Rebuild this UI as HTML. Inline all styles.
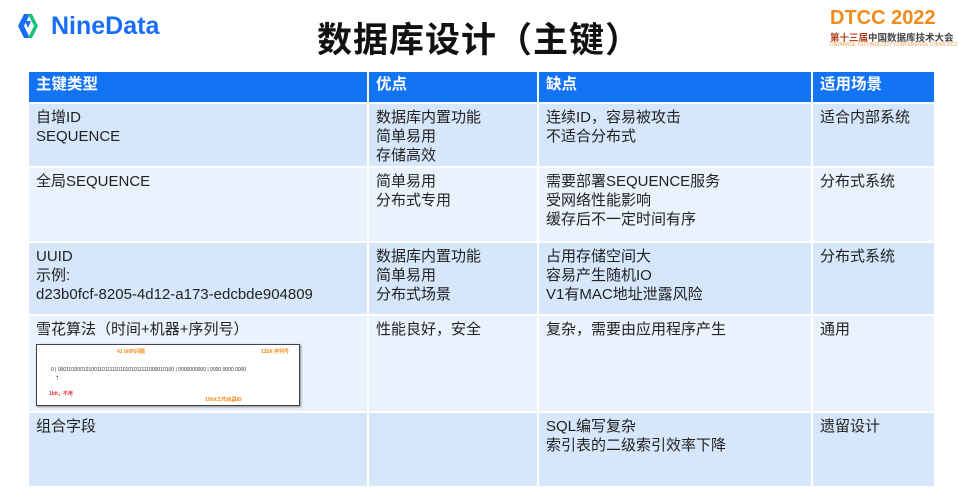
<!DOCTYPE html><html><head><meta charset="utf-8"><style>
body{margin:0;width:958px;height:499px;background:#fff;position:relative;overflow:hidden;font-family:"Liberation Sans","Noto Sans CJK SC",sans-serif}
.t{position:absolute;left:0;width:958px;top:12px;text-align:center;font-size:35px;font-weight:bold;color:#111;letter-spacing:1px}
.logo{position:absolute;left:14px;top:11px;display:flex;align-items:center}
.logo span{font-size:25px;font-weight:bold;color:#1a6ef5;margin-left:7px}
table{position:absolute;left:27px;top:70px;border-collapse:collapse;width:909px;table-layout:fixed}
td,th{border:2px solid #fff;vertical-align:top;text-align:left;padding:4px 7px 0;font-size:15px;line-height:19px;color:#222;overflow:hidden}
th{background:#1273f5;color:#fff;height:27px;font-size:15.5px;padding-top:3px;padding-bottom:0}
tr.d td{background:#d6e6fb}tr.l td{background:#eaf2fd}
</style></head><body>
<div class="logo"><svg width="30" height="30" viewBox="0 0 30 30"><path d="M10 3 L4 15 L10 27 L16 27 L10 15 L16 3Z" fill="#1a6ef5"/><path d="M18 3 L24 15 L18 27 L14 27 L20 15 L14 3Z" fill="#19c37d"/><path d="M11 10 L17 10 L14 17Z" fill="#1a6ef5"/></svg><span>NineData</span></div>
<div class="t">数据库设计（主键）</div>
<div style="position:absolute;left:830px;top:7px;width:115px;font-size:20px;font-weight:bold;color:#f08c1c;line-height:22px">DTCC 2022</div>
<div style="position:absolute;left:830px;top:30px;font-size:9.5px;font-weight:bold;color:#b0421c">第十三届<span style="color:#444">中国数据库技术大会</span></div>
<div style="position:absolute;left:830px;top:42px;font-size:5px;color:#f0a050">DATABASE TECHNOLOGY CONFERENCE CHINA 2022</div>
<table>
<colgroup><col style="width:340px"><col style="width:170px"><col style="width:274px"><col></colgroup>
<tr><th>主键类型</th><th>优点</th><th>缺点</th><th>适用场景</th></tr>
<tr class="d" style="height:64px"><td>自增ID<br>SEQUENCE</td><td>数据库内置功能<br>简单易用<br>存储高效</td><td>连续ID，容易被攻击<br>不适合分布式</td><td>适合内部系统</td></tr>
<tr class="l" style="height:75px"><td>全局SEQUENCE</td><td>简单易用<br>分布式专用</td><td>需要部署SEQUENCE服务<br>受网络性能影响<br>缓存后不一定时间有序</td><td>分布式系统</td></tr>
<tr class="d" style="height:73px"><td>UUID<br>示例:<br>d23b0fcf-8205-4d12-a173-edcbde904809</td><td>数据库内置功能<br>简单易用<br>分布式场景</td><td>占用存储空间大<br>容易产生随机IO<br>V1有MAC地址泄露风险</td><td>分布式系统</td></tr>
<tr class="l" style="height:97px"><td>雪花算法（时间+机器+序列号）
<div style="margin-top:5px;width:262px;height:60px;background:#fff;border:1px solid #444;box-shadow:1px 1px 2px #888;position:relative;font-size:5px;line-height:6px">
<div style="position:absolute;left:80px;top:4px;color:#f08c1c;font-weight:bold">41 bit时间戳</div>
<div style="position:absolute;left:224px;top:4px;color:#f08c1c;font-weight:bold">12bit 序列号</div>
<div style="position:absolute;left:14px;top:22px;color:#333">0 | 0001010001010011011111010101011111000010100 | 0000000000 | 0000 0000 0000</div>
<div style="position:absolute;left:12px;top:46px;color:#e33;font-weight:bold">1bit，不用</div>
<div style="position:absolute;left:168px;top:52px;color:#f08c1c;font-weight:bold">10bit工作机器ID</div>
<div style="position:absolute;left:18px;top:30px;font-size:8px">↑</div>
</div></td><td>性能良好，安全</td><td>复杂，需要由应用程序产生</td><td>通用</td></tr>
<tr class="d" style="height:75px"><td>组合字段</td><td></td><td>SQL编写复杂<br>索引表的二级索引效率下降</td><td>遗留设计</td></tr>
</table>
</body></html>
